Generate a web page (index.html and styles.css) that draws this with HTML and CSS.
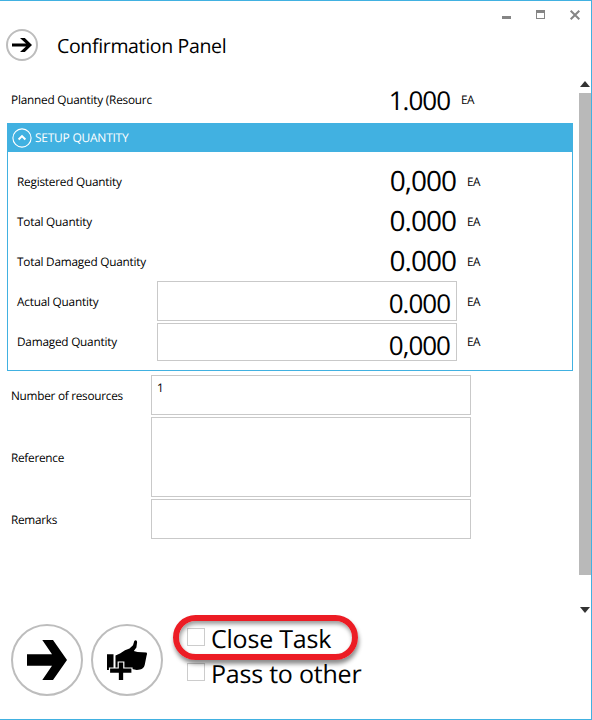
FILE: index.html
```html
<!DOCTYPE html>
<html lang="en">
<head>
<meta charset="utf-8">
<title>Confirmation Panel</title>
<link rel="stylesheet" href="styles.css">
</head>
<body>
<div class="window">
  <header class="titlebar">
    <svg class="back" width="32" height="32" viewBox="0 0 32 32"><circle cx="16" cy="16" r="15" fill="#fff" stroke="#bdbdbd" stroke-width="2"/><path d="M6 14.6H20L14 9H18.8L26 16L18.8 23H14L20 17.6H6Z"/></svg>
    <h1 class="title">Confirmation Panel</h1>
    <svg class="controls" width="80" height="12" viewBox="0 0 80 12"><path d="M2 7H11V10H2Z" fill="#858585"/><path d="M36 1H45V10H36ZM37 4V9H44V4Z" fill="#858585" fill-rule="evenodd"/><path d="M70.7 1.7L79.3 10.3M79.3 1.7L70.7 10.3" stroke="#858585" stroke-width="2"/></svg>
  </header>
  <div class="scroller">
    <main class="content">
      <div class="row planned"><span class="label">Planned Quantity (Resourc</span><span class="value small">1.000</span><span class="unit">EA</span></div>
      <section class="panel">
        <div class="panel-head">
          <svg width="20" height="20" viewBox="0 0 20 20" fill="none" stroke="#fff"><circle cx="10" cy="10" r="9.1" stroke-width="1.1"/><path d="M6.6 11.5L10 8.1L13.4 11.5" stroke-width="2"/></svg>
          <h2 class="panel-title">SETUP QUANTITY</h2>
        </div>
        <div class="panel-body">
          <div class="row"><span class="label">Registered Quantity</span><span class="value">0,000</span><span class="unit">EA</span></div>
          <div class="row"><span class="label">Total Quantity</span><span class="value">0.000</span><span class="unit">EA</span></div>
          <div class="row"><span class="label">Total Damaged Quantity</span><span class="value">0.000</span><span class="unit">EA</span></div>
          <div class="row"><span class="label">Actual Quantity</span><div class="box value small actual">0.000</div><span class="unit">EA</span></div>
          <div class="row"><span class="label">Damaged Quantity</span><div class="box value small damaged">0,000</div><span class="unit">EA</span></div>
        </div>
      </section>
      <div class="field"><span class="label">Number of resources</span><div class="box">1</div></div>
      <div class="field tall"><span class="label">Reference</span><div class="box"></div></div>
      <div class="field"><span class="label">Remarks</span><div class="box"></div></div>
    </main>
    <div class="scrollbar">
      <svg class="up" width="10" height="6" viewBox="0 0 10 6"><path d="M5 0L10 6H0Z" fill="#333"/></svg>
      <div class="thumb"></div>
      <svg class="down" width="10" height="6" viewBox="0 0 10 6"><path d="M0 0H10L5 6Z" fill="#333"/></svg>
    </div>
  </div>
  <footer class="footer">
    <svg width="72" height="72" viewBox="0 0 72 72"><circle cx="36" cy="36" r="35" fill="#fff" stroke="#bdbdbd" stroke-width="2"/><path d="M16 30.3H41L31.3 16H42L56 36L42 56H31.3L41 41.7H16Z"/></svg>
    <svg width="72" height="72" viewBox="0 0 72 72"><circle cx="36" cy="36" r="35" fill="#fff" stroke="#bdbdbd" stroke-width="2"/><path d="M16 30.2H22.5V46H16ZM24.5 31.5L29 29.5L34 26.2L38.5 24.5L42 21.2L43.3 17C44.2 15.6 46.2 16 46.1 18.2L45.4 23.4L42.8 27L46.5 28L55.3 28.5C56.4 29 56 30.4 55.6 31.5L53.7 41C53 43.6 51.5 45 49 45.5L45.8 46L41 45H24.5Z"/><path d="M27.2 38H32.8V44H41V49.3H32.8V56.7H27.2V49.3H18.5V44H27.2Z" stroke="#fff" stroke-width="1.2"/></svg>
    <div class="options">
      <div class="option"><i class="check"></i><span class="option-text">Close Task</span></div>
      <div class="option"><i class="check"></i><span class="option-text">Pass to other</span></div>
      <div class="highlight"></div>
    </div>
  </footer>
</div>
</body>
</html>
```
FILE: styles.css
```css
* { box-sizing: border-box; }
body { margin: 0; background: #fff; color: #000; font: 11.8px/16px "Open Sans", "Noto Sans", sans-serif; text-rendering: geometricPrecision; }
svg { display: block; flex: none; }
h1, h2 { margin: 0; font-weight: 400; }
.window { width: 592px; height: 720px; border: 1px solid #41b1e1; border-left: 0; display: flex; flex-direction: column; overflow: hidden; }
.titlebar { height: 79px; display: flex; align-items: flex-start; padding-left: 6px; flex: none; }
.back { margin-top: 28px; }
.title { margin: 31px 0 0 19px; font-size: 19.5px; line-height: 28px; letter-spacing: -0.34px; white-space: nowrap; }
.controls { margin: 8px 11px 0 auto; }
.scroller { display: flex; justify-content: space-between; height: 535px; flex: none; }
.content { width: 573px; padding-left: 7px; }
.row { display: flex; align-items: center; height: 40px; }
.label { width: 140px; flex: none; white-space: nowrap; letter-spacing: -0.22px; }
.value { width: 300px; text-align: right; font-size: 28px; line-height: 38px; letter-spacing: -1px; padding: 0 1px 2px 0; }
.value.small { font-size: 26px; line-height: 36px; }
.unit { margin-left: 10px; letter-spacing: -0.45px; }
.planned { padding-left: 4px; height: 43px; padding-bottom: 3px; }
.planned .value { padding: 0 1px 0 0; }
.panel { border: 1px solid #41b1e1; height: 248px; }
.panel-head { height: 28px; background: #41b1e1; display: flex; align-items: center; padding-left: 4px; gap: 3px; color: #fff; }
.panel-title { font-size: 12px; line-height: 18px; letter-spacing: -0.25px; }
.panel-body { padding: 10px 0 0 9px; }
.box { border: 1px solid #c9c9c9; background: #fff; }
.box.value { padding: 3px 6px 0 0; align-self: flex-start; }
.actual { height: 40px; margin-top: -1px; }
.damaged { height: 38px; margin-top: 1px; }
.panel + .field { margin-top: 4px; }
.field { display: flex; align-items: center; height: 40px; margin-bottom: 2px; padding-left: 4px; }
.field.tall { height: 80px; }
.field .label { padding-top: 2px; letter-spacing: -0.27px; }
.field .box { width: 320px; height: 100%; padding: 4px 5px; }
.scrollbar { width: 12px; display: flex; flex-direction: column; align-items: center; }
.up { margin-top: 1px; }
.thumb { width: 12px; height: 482px; margin-top: 6px; background: #b9b9b9; }
.down { margin-top: 32px; }
.footer { display: flex; gap: 8px; padding: 9px 0 0 11px; }
.options { position: relative; margin: 0 0 0 16px; width: 200px; }
.option { display: flex; align-items: center; gap: 6px; height: 35px; font-size: 25px; line-height: 30px; letter-spacing: -0.22px; white-space: nowrap; }
.options .option:first-child { margin-top: -5px; }
.option-text { padding-top: 5px; }
.check { width: 18px; height: 18px; border: 1px solid #ccc; flex: none; }
.highlight { position: absolute; left: -14px; top: -9px; width: 185px; height: 45px; border: 6px solid #ec1c24; border-radius: 23px; box-shadow: 1px 4px 4px rgba(0,0,0,.45), inset 1px 3px 4px rgba(0,0,0,.4); }
```
